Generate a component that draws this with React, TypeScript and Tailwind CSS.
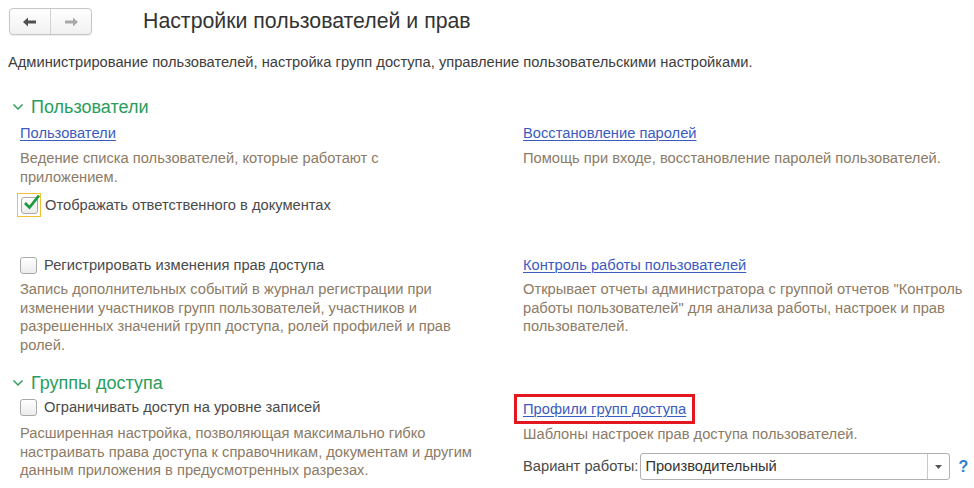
import React from "react";

const desc = "text-[#8c7b66]";
const link = "text-[#3b5bc0] underline underline-offset-2 decoration-1";

function Chevron() {
  return (
    <svg width="14" height="14" viewBox="0 0 14 14" className="shrink-0">
      <path d="M2.5 4.5 L7 9 L11.5 4.5" fill="none" stroke="#2e9e5b" strokeWidth="1.5" />
    </svg>
  );
}

function Box({ checked, focused }: { checked?: boolean; focused?: boolean }) {
  return (
    <span
      className={
        "flex shrink-0 items-center justify-center " +
        (focused ? "h-[24px] w-[24px] border border-[#f2c230]" : "h-[17px] w-[17px]")
      }
    >
      <span className="relative h-[17px] w-[17px] rounded-[3px] border border-[#a9a9a9] bg-gradient-to-b from-white to-[#ececec]">
        {checked && (
          <svg width="20" height="19" viewBox="0 0 20 19" className="absolute -top-[5px] left-[0px]">
            <path d="M3 10 L7.5 14.5 L17 2.5" fill="none" stroke="#1a9a3c" strokeWidth="2.8" />
          </svg>
        )}
      </span>
    </span>
  );
}

export default function App() {
  return (
    <div
      className="relative h-[488px] w-[974px] overflow-hidden bg-white text-[14.7px] text-[#4a4a4a]"
      style={{ fontFamily: '"Liberation Sans", Arial, sans-serif' }}
    >
      <div className="flex h-[43px] items-center pl-[9px]">
        <div className="flex h-[27px] w-[83px] rounded-[4px] border border-[#c6c6c6] bg-gradient-to-b from-white to-[#f1f1f1] shadow-[0_1px_1px_rgba(0,0,0,0.08)]">
          <span className="flex flex-1 items-center justify-center border-r border-[#d2d2d2]">
            <svg width="16" height="12" viewBox="0 0 16 12">
              <path d="M1 6 L6 1.5 V4.5 H14 V7.5 H6 V10.5 Z" fill="#505050" />
            </svg>
          </span>
          <span className="flex flex-1 items-center justify-center">
            <svg width="16" height="12" viewBox="0 0 16 12">
              <path d="M15 6 L10 1.5 V4.5 H2 V7.5 H10 V10.5 Z" fill="#a9a9a9" />
            </svg>
          </span>
        </div>
        <h1 className="ml-[51px] text-[21.3px] text-[#333]">Настройки пользователей и прав</h1>
      </div>

      <p className="mt-[10px] pl-[8px] leading-[18px] text-[#3d3d3d]">
        Администрирование пользователей, настройка групп доступа, управление пользовательскими настройками.
      </p>

      <div className="mt-[25px] flex items-center gap-[6px] pl-[11px] text-[18px] leading-[22px] text-[#2a9d5c]">
        <Chevron />
        <span>Пользователи</span>
      </div>

      <div className="grid grid-cols-[503px_1fr] pl-[20px]">
        <div>
          <div className="mt-[6px] leading-[18px]">
            <span className={link}>Пользователи</span>
          </div>
          <p className={"mt-[7px] w-[400px] leading-[18.5px] " + desc}>
            Ведение списка пользователей, которые работают с приложением.
          </p>
          <div className="mt-[7px] -ml-[3px] flex items-center gap-[4px]">
            <Box checked focused />
            <span>Отображать ответственного в документах</span>
          </div>
        </div>
        <div>
          <div className="mt-[6px] leading-[18px]">
            <span className={link}>Восстановление паролей</span>
          </div>
          <p className={"mt-[7px] leading-[18.5px] " + desc}>
            Помощь при входе, восстановление паролей пользователей.
          </p>
        </div>

        <div className="mt-[39px]">
          <div className="flex h-[18px] items-center gap-[7px]">
            <Box />
            <span>Регистрировать изменения прав доступа</span>
          </div>
          <p className={"mt-[6px] w-[455px] leading-[18.5px] " + desc}>
            Запись дополнительных событий в журнал регистрации при изменении участников групп пользователей,
            участников и разрешенных значений групп доступа, ролей профилей и прав ролей.
          </p>
        </div>
        <div className="mt-[39px]">
          <div className="leading-[18px]">
            <span className={link}>Контроль работы пользователей</span>
          </div>
          <p className={"mt-[6px] w-[445px] leading-[18.5px] " + desc}>
            Открывает отчеты администратора с группой отчетов "Контроль работы пользователей" для анализа
            работы, настроек и прав пользователей.
          </p>
        </div>
      </div>

      <div className="mt-[18px] flex items-center gap-[6px] pl-[11px] text-[18px] leading-[22px] text-[#2a9d5c]">
        <Chevron />
        <span>Группы доступа</span>
      </div>

      <div className="grid grid-cols-[503px_1fr] pl-[20px]">
        <div>
          <div className="mt-[4px] flex h-[18px] items-center gap-[7px]">
            <Box />
            <span>Ограничивать доступ на уровне записей</span>
          </div>
          <p className={"mt-[8px] w-[478px] leading-[18.5px] " + desc}>
            Расширенная настройка, позволяющая максимально гибко настраивать права доступа к справочникам,
            документам и другим данным приложения в предусмотренных разрезах.
          </p>
        </div>
        <div>
          <div className="-ml-[9px] inline-block border-[3px] border-[#e3171f] px-[6px] py-[3px] leading-[18px]">
            <span className={link}>Профили групп доступа</span>
          </div>
          <p className={"mt-[1px] leading-[18px] " + desc}>Шаблоны настроек прав доступа пользователей.</p>
          <div className="mt-[10px] flex items-center">
            <span className="text-[#4a4a4a]">Вариант работы:</span>
            <div className="ml-[2px] flex h-[27px] w-[310px] rounded-[3px] border border-[#b0b0b0] bg-white">
              <span className="flex flex-1 items-center pl-[4px] text-[#333]">Производительный</span>
              <span className="flex w-[22px] items-center justify-center border-l border-[#c8c8c8]">
                <svg width="7" height="4" viewBox="0 0 7 4">
                  <path d="M0 0 H7 L3.5 4 Z" fill="#555" />
                </svg>
              </span>
            </div>
            <span className="ml-[8px] text-[16px] font-bold text-[#2c7fcf]">?</span>
          </div>
        </div>
      </div>
    </div>
  );
}
